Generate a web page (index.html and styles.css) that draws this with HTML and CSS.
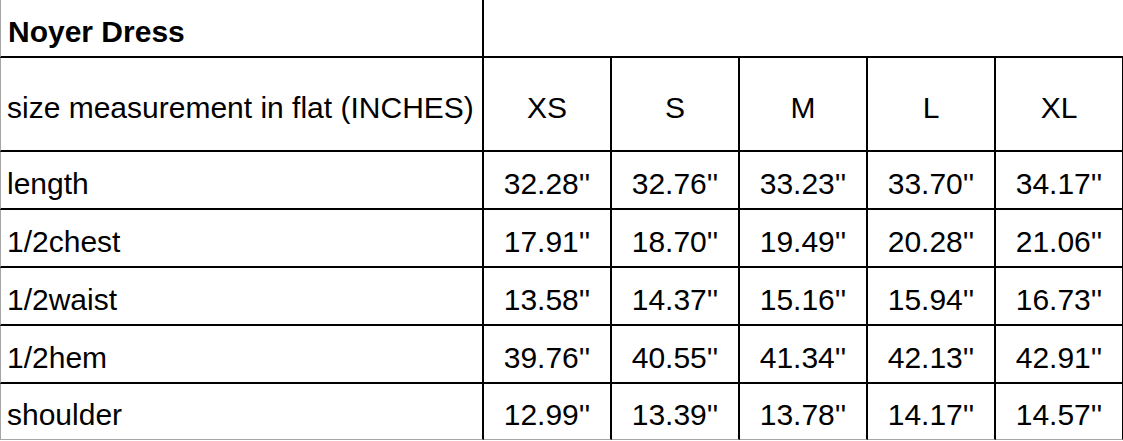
FILE: index.html
```html
<!DOCTYPE html>
<html lang="en">
<head>
<meta charset="utf-8">
<title>Noyer Dress</title>
<link rel="stylesheet" href="styles.css">
</head>
<body>
<div class="sheet">
  <div class="row row-title">
    <div class="cell label title">Noyer Dress</div>
    <div class="cell blank"></div>
  </div>
  <div class="row row-head">
    <div class="cell label">size measurement in flat (INCHES)</div>
    <div class="cell num">XS</div>
    <div class="cell num">S</div>
    <div class="cell num">M</div>
    <div class="cell num">L</div>
    <div class="cell num last">XL</div>
  </div>
  <div class="row">
    <div class="cell label">length</div>
    <div class="cell num">32.28''</div>
    <div class="cell num">32.76''</div>
    <div class="cell num">33.23''</div>
    <div class="cell num">33.70''</div>
    <div class="cell num last">34.17''</div>
  </div>
  <div class="row">
    <div class="cell label">1/2chest</div>
    <div class="cell num">17.91''</div>
    <div class="cell num">18.70''</div>
    <div class="cell num">19.49''</div>
    <div class="cell num">20.28''</div>
    <div class="cell num last">21.06''</div>
  </div>
  <div class="row">
    <div class="cell label">1/2waist</div>
    <div class="cell num">13.58''</div>
    <div class="cell num">14.37''</div>
    <div class="cell num">15.16''</div>
    <div class="cell num">15.94''</div>
    <div class="cell num last">16.73''</div>
  </div>
  <div class="row">
    <div class="cell label">1/2hem</div>
    <div class="cell num">39.76''</div>
    <div class="cell num">40.55''</div>
    <div class="cell num">41.34''</div>
    <div class="cell num">42.13''</div>
    <div class="cell num last">42.91''</div>
  </div>
  <div class="row row-last">
    <div class="cell label">shoulder</div>
    <div class="cell num">12.99''</div>
    <div class="cell num">13.39''</div>
    <div class="cell num">13.78''</div>
    <div class="cell num">14.17''</div>
    <div class="cell num last">14.57''</div>
  </div>
</div>
</body>
</html>
```

FILE: styles.css
```css
html, body {
  margin: 0;
  padding: 0;
  background: #ffffff;
}

.sheet {
  width: 1123px;
  height: 441px;
  font-family: "Liberation Sans", Arial, sans-serif;
  font-size: 30px;
  color: #000000;
  display: flex;
  flex-direction: column;
}

.row {
  display: grid;
  grid-template-columns: 484px 128px 128px 128px 128px 127px;
  height: 58px;
}

.row-title {
  height: 58px;
}

.row-head {
  height: 94px;
}

.row-last {
  height: 57px;
}

.cell {
  box-sizing: border-box;
  display: flex;
  align-items: center;
  border-right: 2px solid #000000;
  border-bottom: 2px solid #000000;
  padding-top: 7px;
  white-space: nowrap;
  line-height: 34px;
}

.label {
  border-left: 1px solid #a6a6a6;
  padding-left: 6px;
}

.title {
  font-weight: bold;
  padding-left: 7px;
}

.blank {
  grid-column: 2 / span 5;
  border-right: none;
}

.num {
  justify-content: center;
}

.last {
  border-right-width: 1px;
}

.row-last .cell {
  border-bottom: 1px solid #a6a6a6;
  height: 56px;
}
```
